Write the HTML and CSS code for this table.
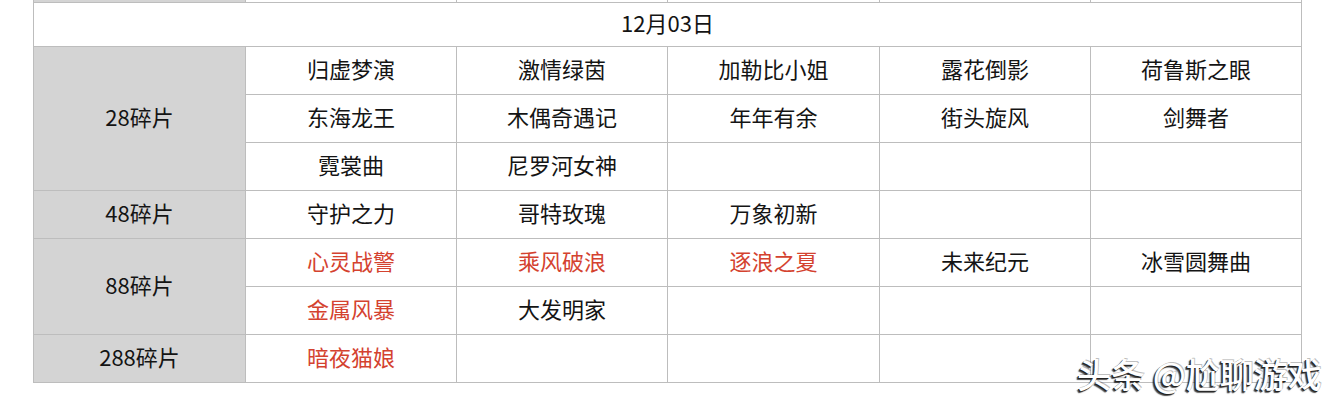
FILE: index.html
```html
<!DOCTYPE html>
<html lang="zh">
<head>
<meta charset="utf-8">
<link rel="stylesheet" href="styles.css">
</head>
<body>
<div class="page">
  <div class="grid">
    <div class="cell gray top"></div>
    <div class="cell top"></div>
    <div class="cell top"></div>
    <div class="cell top"></div>
    <div class="cell top"></div>
    <div class="cell top"></div>

    <div class="cell header">12月03日</div>

    <div class="cell gray span3">28碎片</div>
    <div class="cell">归虚梦演</div>
    <div class="cell">激情绿茵</div>
    <div class="cell">加勒比小姐</div>
    <div class="cell">露花倒影</div>
    <div class="cell">荷鲁斯之眼</div>
    <div class="cell">东海龙王</div>
    <div class="cell">木偶奇遇记</div>
    <div class="cell">年年有余</div>
    <div class="cell">街头旋风</div>
    <div class="cell">剑舞者</div>
    <div class="cell">霓裳曲</div>
    <div class="cell">尼罗河女神</div>
    <div class="cell"></div>
    <div class="cell"></div>
    <div class="cell"></div>

    <div class="cell gray">48碎片</div>
    <div class="cell">守护之力</div>
    <div class="cell">哥特玫瑰</div>
    <div class="cell">万象初新</div>
    <div class="cell"></div>
    <div class="cell"></div>

    <div class="cell gray span2">88碎片</div>
    <div class="cell red">心灵战警</div>
    <div class="cell red">乘风破浪</div>
    <div class="cell red">逐浪之夏</div>
    <div class="cell">未来纪元</div>
    <div class="cell">冰雪圆舞曲</div>
    <div class="cell red">金属风暴</div>
    <div class="cell">大发明家</div>
    <div class="cell"></div>
    <div class="cell"></div>
    <div class="cell"></div>

    <div class="cell gray">288碎片</div>
    <div class="cell red">暗夜猫娘</div>
    <div class="cell"></div>
    <div class="cell"></div>
    <div class="cell"></div>
    <div class="cell"></div>
  </div>
  <div class="watermark">头条 @尬聊游戏</div>
</div>
</body>
</html>
```

FILE: styles.css
```css
html, body {
  margin: 0;
  padding: 0;
  background: #ffffff;
}
.page {
  position: relative;
  width: 1334px;
  height: 406px;
  overflow: hidden;
  font-family: "Noto Sans CJK SC", "Noto Sans", sans-serif;
}
.grid {
  margin-left: 33px;
  width: 1269px;
  display: grid;
  grid-template-columns: 211px 210px 210px 211px 210px 210px;
  grid-template-rows: 2px 43px repeat(7, 47px);
  gap: 1px;
  padding: 0 1px 1px 1px;
  box-sizing: border-box;
  background: #bdbdbd;
}
.cell {
  background: #ffffff;
  display: flex;
  align-items: center;
  justify-content: center;
  font-size: 22px;
  color: #141414;
  line-height: 1;
  padding-bottom: 5px;
  box-sizing: border-box;
}
.top {
  padding-bottom: 0;
}
.gray {
  background: #d4d4d4;
}
.header {
  grid-column: 1 / span 6;
}
.span3 {
  grid-row: span 3;
}
.span2 {
  grid-row: span 2;
}
.red {
  color: #d4422f;
}
.watermark {
  position: absolute;
  left: 1077px;
  top: 349px;
  font-size: 34px;
  font-weight: 500;
  color: #ffffff;
  white-space: nowrap;
  text-shadow: -1px 1px 0 #222, -2px 2px 1px rgba(0,0,0,0.7), 1px -1px 0 rgba(0,0,0,0.25);
}
```
